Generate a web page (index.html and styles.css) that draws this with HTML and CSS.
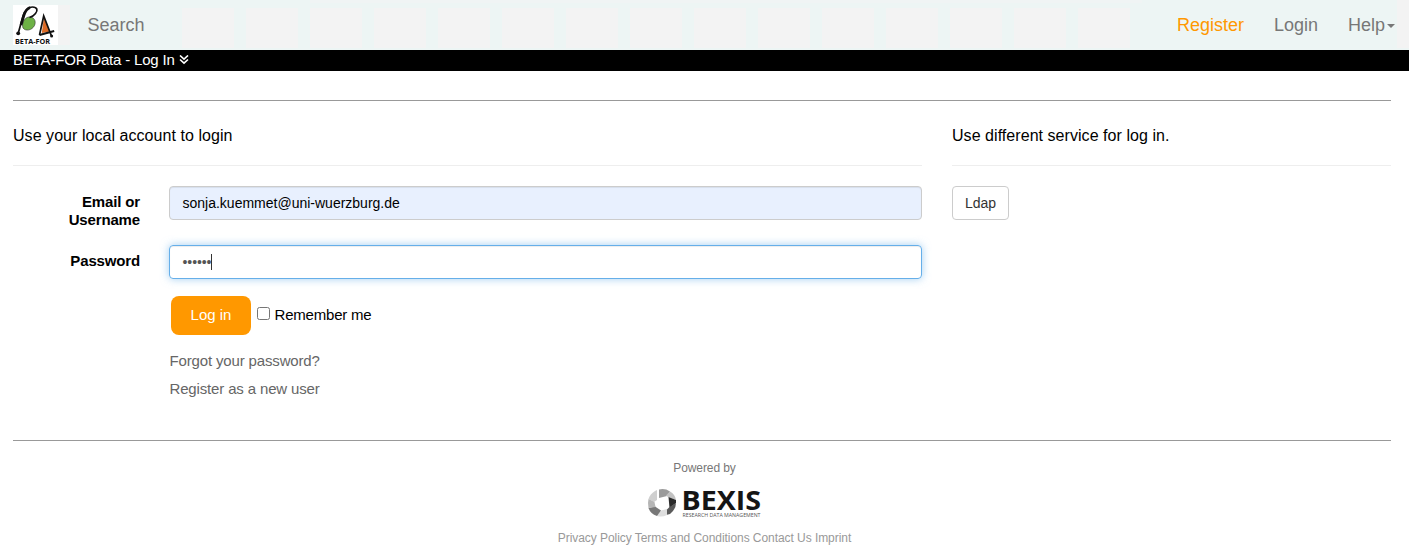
FILE: index.html
```html
<!DOCTYPE html>
<html lang="en">
<head>
<meta charset="utf-8">
<title>BETA-FOR Data - Log In</title>
<link rel="stylesheet" href="styles.css">
</head>
<body>
<header class="navbar">
  <svg class="brand" width="45" height="40" viewBox="0 0 45 40">
    <rect width="45" height="40" fill="#fff"/>
    <path d="M15.500 12C21 11.500 23.500 16 21.500 20.500C19 25.500 12.500 26.500 10 23C8.500 19 11 13 15.500 12Z" fill="#6db146" stroke="#333" stroke-width=".6"/>
    <path d="M5.300 28L10 11C12 5 15.500 2 19.500 2C24.500 2 25 5.500 22.500 8.500C21 10.500 19 11.800 16.500 12.500" fill="none" stroke="#111" stroke-width="1.700"/>
    <path d="M8 20L11 10C12.500 5.500 14.500 3.500 17 2.500" fill="none" stroke="#111" stroke-width="2.700"/>
    <circle cx="5.200" cy="28.300" r="1.900" fill="#111"/>
    <path d="M31 12L28.800 28L37 26.500Z" fill="#dc6a25"/>
    <path d="M26.500 30L30.700 11L38.500 31" fill="none" stroke="#111" stroke-width="1.700"/>
    <path d="M26.500 30L41.200 26" fill="none" stroke="#111" stroke-width="1.900"/>
    <circle cx="38.600" cy="31" r="1.500" fill="#111"/>
    <text x="2" y="38.800" textLength="35" lengthAdjust="spacingAndGlyphs" class="brand-text">BETA-FOR</text>
  </svg>
  <a class="nav-link">Search</a>
  <nav class="nav-right">
    <a class="nav-link accent">Register</a>
    <a class="nav-link">Login</a>
    <a class="nav-link">Help<span class="caret"></span></a>
  </nav>
</header>
<div class="titlebar">BETA-FOR Data - Log In
  <svg width="10" height="10" viewBox="0 0 10 10"><path d="M1 .5L5 4.200L9 .5M1 4.500L5 8.200L9 4.500" fill="none" stroke="#fff" stroke-width="1.600"/></svg>
</div>
<main class="content">
  <section class="local">
    <h2>Use your local account to login</h2>
    <div class="row">
      <label>Email or Username</label>
      <div class="field filled">sonja.kuemmet@uni-wuerzburg.de</div>
    </div>
    <div class="row">
      <label>Password</label>
      <div class="field focused">••••••<span class="cursor"></span></div>
    </div>
    <div class="actions">
      <button class="login">Log in</button>
      <span class="check"></span>
      <span class="remember">Remember me</span>
    </div>
    <a class="link">Forgot your password?</a>
    <a class="link">Register as a new user</a>
  </section>
  <section class="other">
    <h2>Use different service for log in.</h2>
    <button class="ldap">Ldap</button>
  </section>
</main>
<footer class="footer">
  <div class="powered">Powered by</div>
  <svg class="bexis" width="116" height="30" viewBox="0 0 116 30">
    <path d="M8 3L10 2V12L7 14L1.500 11Q3 6 8 3Z" fill="#cfcfcf"/>
    <path d="M12 1.500Q18 0 23 3.500L20 8L12 10Z" fill="#9b9b9b"/>
    <path d="M23 3.500Q28 6 29 12L21 9L19 7.500Z" fill="#c2c2c2"/>
    <path d="M21.500 9L29 12V15L22.500 20Z" fill="#2b2b2b"/>
    <path d="M29 15Q29 21 23 26L19 27L19.500 22L22.500 19Z" fill="#5a5a5a"/>
    <path d="M20 27Q15 29.500 10 28L14 22.500L20 21Z" fill="#dedede"/>
    <path d="M1.500 20L8 18.500L14 22.500L10 28Q3.500 26 1.500 20Z" fill="#777"/>
    <path d="M1.500 11L7.500 14L8.500 19L1.500 20Q.5 15 1.500 11Z" fill="#b5b5b5"/>
    <text class="bexis-name" x="34.500" y="21.500" textLength="79.500" lengthAdjust="spacingAndGlyphs">BEXIS</text>
    <text class="bexis-sub" x="35.500" y="28.500" textLength="78" lengthAdjust="spacingAndGlyphs">RESEARCH DATA MANAGEMENT</text>
  </svg>
  <div class="legal"><a>Privacy Policy</a> <a>Terms and Conditions</a> <a>Contact Us</a> <a>Imprint</a></div>
</footer>
</body>
</html>
```
FILE: styles.css
```css
* { box-sizing: border-box; }
body {
  margin: 0;
  background: #fff;
  color: #000;
  font-family: "Liberation Sans", Arial, sans-serif;
  font-size: 15px;
  line-height: 18px;
}
.navbar {
  display: flex;
  align-items: center;
  height: 50px;
  padding: 0 14px 0 13px;
  background:
    linear-gradient(#f3f3f3, #f3f3f3) 58px 5px / 12px 40px no-repeat,
    linear-gradient(#f3f3f3, #f3f3f3) 1397px 0 / 12px 48px no-repeat,
    linear-gradient(#f0f4f4, #f0f4f4) 310px 0 / 832px 3px no-repeat,
    linear-gradient(#edf5f4, #edf5f4) 0 0 / 182px 50px no-repeat,
    linear-gradient(#edf5f4, #edf5f4) 1131px 0 / 278px 50px no-repeat,
    linear-gradient(#edf5f4, #edf5f4) 0 0 / 100% 8px no-repeat,
    linear-gradient(#edf5f4, #edf5f4) 0 48px / 100% 2px no-repeat,
    repeating-linear-gradient(90deg, #f3f3f3 0 52px, #edf5f4 52px 64px) 182px 0 / 1216px 50px no-repeat;
}
.brand-text { font: bold 7.5px "Open Sans", sans-serif; fill: #111; }
.nav-link { color: #777; font-size: 18px; line-height: 20px; }
.brand + .nav-link { margin-left: 29.5px; }
.nav-right { display: flex; gap: 30px; margin-left: auto; }
.nav-link.accent { color: #ff9800; }
.caret {
  display: inline-block;
  margin-left: 2px;
  vertical-align: middle;
  border-top: 4px solid #777;
  border-left: 4px solid transparent;
  border-right: 4px solid transparent;
}
.titlebar {
  height: 21px;
  padding-left: 13px;
  background: #000;
  color: #fff;
  line-height: 20px;
  letter-spacing: -.18px;
}
.content {
  display: grid;
  grid-template-columns: 909px 439px;
  column-gap: 30px;
  height: 341px;
  margin: 29px 18px 0 13px;
  padding-top: 25px;
  border: solid #999;
  border-width: 1px 0;
}
h2 {
  margin: 0 0 20px;
  padding-bottom: 19px;
  border-bottom: 1px solid #eee;
  font-size: 16px;
  font-weight: 400;
  line-height: 20px;
  letter-spacing: .05px;
}
.row { display: flex; gap: 29px; margin-bottom: 15px; }
label {
  width: 127px;
  height: 44px;
  padding: 7px 0 0 30px;
  font-weight: 700;
  letter-spacing: -.15px;
  text-align: right;
}
.field {
  display: flex;
  align-items: center;
  flex: 1;
  height: 34px;
  padding: 0 12.5px;
  border: 1px solid #ccc;
  border-radius: 4px;
  font-size: 14px;
  box-shadow: inset 0 1px 1px rgba(0,0,0,.075);
}
.filled { background: #e8f0fe; }
.focused {
  border-color: #66afe9;
  color: #555;
  letter-spacing: -.08px;
  box-shadow: inset 0 1px 1px rgba(0,0,0,.075), 0 0 8px rgba(102,175,233,.6);
}
.cursor { width: 1px; height: 16px; background: #333; }
.actions { display: flex; align-items: center; height: 39px; margin: -8px 0 17px 158px; }
button { font-family: inherit; }
.login {
  width: 80px;
  height: 39px;
  padding: 0 0 2px;
  border: 0;
  border-radius: 8px;
  background: #ff9800;
  color: #fff;
  font-size: 15px;
}
.check {
  width: 13px;
  height: 13px;
  margin: 0 4.5px 4px 6px;
  border: 1px solid #767676;
  border-radius: 2.5px;
}
.remember { padding-bottom: 2px; letter-spacing: -.2px; }
.link { display: block; margin: 0 0 10px 156.5px; color: #666; letter-spacing: -.15px; }
.ldap {
  width: 57px;
  height: 34px;
  padding: 0;
  border: 1px solid #ccc;
  border-radius: 4px;
  background: #fff;
  color: #333;
  font-size: 14px;
}
.footer {
  display: flex;
  flex-direction: column;
  align-items: center;
  padding-top: 18px;
  font-size: 12px;
}
.powered { color: #777; letter-spacing: -.08px; }
.bexis { margin: 11px 0; }
.bexis-name { font: 700 26.5px/1 "Open Sans", sans-serif; fill: #151515; }
.bexis-sub { font: 5px/1 "Open Sans", sans-serif; fill: #555; }
.legal { color: #999; letter-spacing: -.06px; }
```
